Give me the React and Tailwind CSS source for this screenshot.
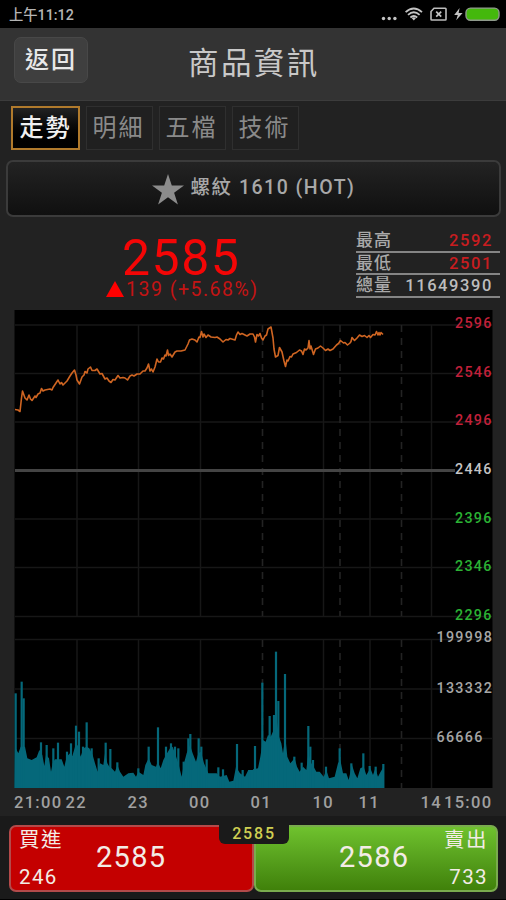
import React from "react";

const TABS = ["走勢", "明細", "五檔", "技術"];

const SUMMARY = [
  { label: "最高", value: "2592", color: "text-[#c81d20]" },
  { label: "最低", value: "2501", color: "text-[#c81d20]" },
  { label: "總量", value: "11649390", color: "text-[#bdbdbd]" },
];

const PRICE_LABELS = [
  { text: "2596", y: 327.5, fill: "#c2203a" },
  { text: "2546", y: 376.5, fill: "#c2203a" },
  { text: "2496", y: 424.5, fill: "#c2203a" },
  { text: "2446", y: 473.5, fill: "#c4c4c4" },
  { text: "2396", y: 522.5, fill: "#2bb234" },
  { text: "2346", y: 570.5, fill: "#2bb234" },
  { text: "2296", y: 619.5, fill: "#2bb234" },
];

const VOLUME_LABELS = [
  { text: "199998", x: 436.5, y: 642 },
  { text: "133332", x: 436.5, y: 693 },
  { text: "66666", x: 436.5, y: 742 },
];

const TIME_LABELS = [
  { text: "21:00", x: 14 },
  { text: "22", x: 65.5 },
  { text: "23", x: 127.5 },
  { text: "00", x: 189 },
  { text: "01", x: 250.5 },
  { text: "10", x: 312.5 },
  { text: "11", x: 358.5 },
  { text: "14", x: 420.5 },
  { text: "15:00", x: 444 },
];

const GRID_ROWS = [325, 373.5, 422, 519, 567.5, 616.5, 639.5, 689, 738.5];
const GRID_COLS = [77, 138.5, 200.5, 323.5, 370, 431.5];
const SESSION_COLS = [262.5, 340, 401.5];

const PRICE_LINE =
  "15,409.5 18,410 20,411.5 21.5,398 22.5,391 25,398 27,400 29,395 30.5,399 32,400.5 35,396 36,397.5 38,394 40,393 41.5,388.5 43,391 45,390 50,389 52,390 53,387.5 56,383 58,380 60,384 61.5,382.5 63,385 67,381 70,376 72,373 74.5,370 76,375 77,380 79.5,384 82,377 84,375 85,371.5 87,373 88,369 90.5,367 92,370.5 95,370.5 97,369 100,374 102,373.5 105,379 107,378 109,381 111,382.5 113,379.5 115,380 118,375.5 120,378 123,377.5 125,378 127.5,380 130,376 132,375 134,376 137,374 140,374 143,371 145,371 147,368 148.5,364 150,371 151.5,369 153,372 155,367 157,359 158.5,362 160.5,362 162,358 163.5,359 165,355 166,356 167.5,350 168.5,355.5 170,354 172,357 175,352 177,351 181,351 185,350 188,344 189.5,340 192,339 195,340 197,342 199,337 200,337.5 201.5,331.5 203,337 204,334 206,337.5 208,335 211,337 215,337.5 217,337 220,339 223,342 226,339.5 228,340 230,338.5 235,340 236.5,335 238,332 240,334.5 242,333.5 247,336 250,334 253,334 254.5,337 255.5,342 257,334.5 258.5,336 260,333.5 261.5,338 263,340 265,336 266.5,335 268,329 271,327 273,338 274,349 275.5,357 278,355.5 279.5,347.5 282,352 284,361 285.5,366.5 287,360 288,361 290,356.5 291.5,357 293,354 296.5,352.5 299.5,350 301.5,351 303,354.5 304.5,349 306,350 308,348 309,340.5 310,349 311,346 313.5,354.5 315.5,349 318,348 320.5,346 323,348 325.5,350.5 328,349 330,350.5 333,349 336.5,345 338.5,343.5 340.5,340.5 343.5,343 345,342.5 347.5,345 350,343 351,341.5 352,337.5 354.5,340.5 357,338 359.5,335 362,336.5 364.5,335.5 367,337.5 369,335.5 370.5,337.5 373,334.5 375,335 376.5,331.5 378,335 379,332.5 380,335 381,332.5 383,334.5";

// both halves are sampled at a third of a pixel
const NIGHT = {
  x: 0,
  y: 630,
  base: [
    [45, 350], [55, 370], [62, 350], [75, 350], [82, 385], [95, 390], [110, 382], [118, 360], [127, 375],
    [133, 408], [138, 375], [147, 385], [153, 425], [158, 400], [165, 388], [185, 388], [193, 410], [200, 380],
    [210, 370], [217, 378], [225, 350], [233, 345], [242, 380], [250, 355], [260, 350], [268, 355], [278, 375],
    [285, 400], [293, 425], [300, 400], [310, 405], [315, 370], [322, 400], [328, 410], [335, 415], [345, 425],
    [352, 405], [360, 425], [370, 440], [385, 430], [400, 428], [408, 440], [415, 425], [430, 435], [436, 405],
    [446, 385], [455, 405], [468, 410], [473, 395], [482, 415], [490, 390], [498, 375], [510, 355], [518, 350],
    [525, 370], [535, 400], [545, 440], [552, 400], [560, 370], [570, 345], [578, 370], [588, 395], [595, 370],
    [603, 365], [612, 400], [625, 430], [650, 430], [660, 440], [680, 435], [688, 455], [700, 452], [708, 410],
    [720, 430], [735, 440], [745, 420], [759, 420],
  ],
  spikes: [
    [47, 190], [65, 155], [71, 205], [123, 337], [140, 345], [160, 355], [174, 338], [201, 365], [213, 340],
    [228, 287], [237, 305], [249, 350], [260, 277], [275, 355], [296, 385], [317, 338], [331, 357], [352, 397],
    [415, 415], [446, 350], [474, 292], [498, 350], [513, 340], [525, 350], [535, 355], [551, 395], [565, 325],
    [571, 312], [596, 325], [604, 350], [620, 388], [655, 412], [669, 418], [711, 342], [728, 420], [748, 420],
  ],
};

const DAY = {
  x: 253,
  y: 600,
  base: [
    [0, 508], [15, 505], [22, 470], [30, 420], [38, 425], [45, 405], [53, 410], [62, 390], [70, 350],
    [78, 410], [85, 430], [90, 460], [97, 410], [103, 470], [112, 490], [125, 475], [132, 500], [140, 515],
    [150, 500], [160, 510], [166, 460], [175, 490], [182, 500], [190, 515], [200, 515], [212, 530], [220, 510],
    [228, 535], [245, 530], [255, 490], [262, 480], [270, 520], [280, 520], [287, 540], [297, 495], [305, 520],
    [313, 535], [322, 505], [332, 500], [340, 525], [352, 505], [360, 525], [367, 505], [375, 530], [383, 515],
    [392, 500],
  ],
  spikes: [
    [6, 438], [28, 248], [50, 348], [63, 345], [69, 155], [76, 303], [96, 222], [124, 470], [146, 488],
    [166, 378], [172, 440], [180, 480], [219, 500], [260, 445], [295, 490], [331, 460], [350, 498], [368, 500],
    [391, 492],
  ],
};

const place = (half, list) => list.map(([x, y]) => [half.x + x / 3, half.y + y / 3]);

const volumeBase = [...place(NIGHT, NIGHT.base), ...place(DAY, DAY.base)];
const volumeSpikes = [...place(NIGHT, NIGHT.spikes), ...place(DAY, DAY.spikes)];

const StatusBar = () => (
  <div className="h-7 shrink-0 bg-black flex items-center justify-between pl-[9px] pr-[6px] pt-[2px]">
    <span className="text-[14.3px] leading-none font-medium text-[#b4b4b4]">上午11:12</span>
    <svg width="121" height="20" viewBox="379 5.5 121 20" fill="none">
      <g fill="#c4c4c4">
        <circle cx="383.5" cy="19" r="1.7" />
        <circle cx="389.2" cy="19" r="1.7" />
        <circle cx="394.9" cy="19" r="1.7" />
      </g>
      <g stroke="#c4c4c4" strokeWidth="1.8">
        <path d="M405.6 12.6Q413.8 5.4 422 12.6" />
        <path d="M408 15.4Q413.8 10.2 419.6 15.4" />
        <path d="M410.4 18Q413.8 15 417.2 18" />
      </g>
      <path d="M411.6 18.6L413.8 21L416 18.6Q413.8 17 411.6 18.6Z" fill="#c4c4c4" />
      <path d="M434 8.8H445.3Q446 8.8 446 9.5V19.8Q446 20.5 445.3 20.5H431.7Q431 20.5 431 19.8V12Z" stroke="#bcbcbc" strokeWidth="1.6" />
      <path d="M436.2 12.2L441.2 17.2M441.2 12.2L436.2 17.2" stroke="#c4c4c4" strokeWidth="1.7" />
      <path d="M459.6 8.5L454.2 15.6H457.8L456.2 20.8L462.6 13.4H458.6Z" fill="#c4c4c4" />
      <rect x="466" y="8.6" width="33" height="12.2" rx="4.5" fill="#44b80c" stroke="#8f9a8c" strokeWidth="1.4" />
    </svg>
  </div>
);

const Header = () => (
  <div className="h-[73px] shrink-0 flex items-start bg-[#333] border-b border-[#3c3c3c] pt-[9px] pl-[14px]">
    <button className="w-[74px] h-[46px] rounded-[7px] border border-[#484848] bg-[#3f3f3f] text-[24px] leading-none tracking-[2px] font-medium text-[#e8e8e8]">
      返回
    </button>
    <h1 className="ml-[100px] mt-[10px] text-[30.5px] leading-[34px] tracking-[2.4px] text-[#c9c9c9]">商品資訊</h1>
  </div>
);

const Tabs = () => (
  <div className="flex gap-[6px] pl-[11px] pt-[5px] shrink-0">
    {TABS.map((tab, i) => (
      <div
        key={tab}
        className={`h-11 flex items-center justify-center pb-[1px] text-[24px] leading-none tracking-[2px] ${
          i === 0
            ? "w-[69px] border-2 border-[#b07a2c] bg-linear-to-b from-[#222] to-black text-[#f0f0f0] font-medium"
            : "w-[67px] pr-[2px] border border-[#2f2f2f] bg-[#202020] text-[#8a8a8a]"
        }`}
      >
        {tab}
      </div>
    ))}
  </div>
);

const ProductBar = () => (
  <div className="h-[57px] mt-[10px] ml-[6px] mr-[5px] shrink-0 flex items-center justify-center rounded-[7px] border-2 border-[#3b3b3b] bg-linear-to-b from-[#232323] to-[#101010]">
    <svg className="mt-[2px]" width="32" height="31" viewBox="0 0 32 31" fill="#8c8c8c">
      <path d="M16 0L19.8 11.6H32L22.1 18.8L25.9 30.5L16 23.3L6.1 30.5L9.9 18.8L0 11.6H12.2Z" />
    </svg>
    <span className="ml-[7px] mb-[1px] text-[19.5px] leading-none tracking-[1.5px] font-medium text-[#a8a8a8]">螺紋 1610 (HOT)</span>
  </div>
);

const Quote = () => (
  <div className="h-[93px] shrink-0 flex justify-between">
    <div className="w-[356px] pt-[20px] text-[#f40606]">
      <div className="pl-[122px] text-[50px] leading-[43px] tracking-[1.5px]">2585</div>
      <div className="flex items-center pl-[106px] pt-[1px]">
        <svg className="mb-[1px]" width="18" height="16" viewBox="0 0 18 16" fill="#ff0000">
          <path d="M9 0L18 16H0Z" />
        </svg>
        <span className="ml-[2px] text-[19.5px] leading-[16px] tracking-[1.5px] text-[#c41414]">139 (+5.68%)</span>
      </div>
    </div>
    <div className="w-[144px] mr-[6px] pt-[13px]">
      {SUMMARY.map((row) => (
        <div key={row.label} className="h-[22.6px] flex items-center justify-between border-b-2 border-[#858585] pr-[7px] leading-none">
          <span className="pt-px text-[17px] tracking-[1px] font-medium text-[#a9a9a9]">{row.label}</span>
          <span className={`pt-[2px] text-[16.5px] tracking-[1.6px] font-medium ${row.color}`}>{row.value}</span>
        </div>
      ))}
    </div>
  </div>
);

const Chart = () => (
  <svg className="shrink-0" width="506" height="506" viewBox="0 310 506 506" fill="none">
    <rect x="14.5" y="310" width="478" height="478" fill="#000" />
    <g stroke="#171717" strokeWidth="1.5">
      {GRID_ROWS.map((y) => (
        <line key={y} x1="15" x2="492" y1={y} y2={y} />
      ))}
      {GRID_COLS.map((x) => (
        <path key={x} d={`M${x} 325V616M${x} 640V788`} />
      ))}
    </g>
    <g stroke="#232323" strokeWidth="1.6" strokeDasharray="7 6">
      {SESSION_COLS.map((x) => (
        <path key={x} d={`M${x} 325V616M${x} 640V788`} />
      ))}
    </g>
    <line x1="15" x2="455" y1="470.5" y2="470.5" stroke="#444" strokeWidth="3" />
    <polygon points={`14.5,788 ${volumeBase.map((p) => p.join(",")).join(" ")} 384,788`} fill="#05687a" />
    {volumeSpikes.map(([x, y]) => (
      <rect key={x} x={x - 1.1} y={y} width="2.2" height={788 - y} fill="#05687a" />
    ))}
    <polyline points={PRICE_LINE} stroke="#cf6522" strokeWidth="1.6" strokeLinejoin="round" />
    <g fontSize="14.3" fontWeight="500" letterSpacing="1.3">
      {PRICE_LABELS.map((l) => (
        <text key={l.text} x="455" y={l.y} fill={l.fill}>
          {l.text}
        </text>
      ))}
      {VOLUME_LABELS.map((l) => (
        <text key={l.text} x={l.x} y={l.y} fill="#a6a6a6">
          {l.text}
        </text>
      ))}
    </g>
    <g fontSize="16.5" fontWeight="500" letterSpacing="1.3" fill="#a0a0a0">
      {TIME_LABELS.map((l) => (
        <text key={l.text} x={l.x} y="808">
          {l.text}
        </text>
      ))}
    </g>
  </svg>
);

const OrderBar = () => (
  <div className="relative flex-1 bg-[#1a1a1a] pt-[9px] pl-[9px] pr-[8px] border-b border-black">
    <div className="h-[67px] flex leading-none text-[#f3ece6]">
      <div className="w-[245px] flex rounded-[7px] border-2 border-[#b34a4a] bg-[#c40000]">
        <div className="w-[84px] pl-[8px] pt-[3px] pb-[3px] flex flex-col justify-between">
          <span className="text-[20.5px] tracking-[1.5px]">買進</span>
          <span className="text-[20.5px] tracking-[1.4px]">246</span>
        </div>
        <span className="pl-px pt-[16px] text-[29px] tracking-[1.3px]">2585</span>
      </div>
      <div className="w-[244px] flex justify-between rounded-[7px] border-2 border-[#7aab4e] bg-linear-to-b from-[#6fc22e] to-[#40810a]">
        <span className="pl-[83px] pt-[16px] text-[29px] tracking-[1.3px]">2586</span>
        <div className="pr-[8px] pt-[3px] pb-[3px] flex flex-col justify-between items-end">
          <span className="text-[20.5px] tracking-[1.5px]">賣出</span>
          <span className="text-[20.5px] tracking-[1.4px]">733</span>
        </div>
      </div>
    </div>
    <div className="absolute left-[219px] top-[6px] w-[70px] h-[22px] rounded-b-[6px] bg-[#1a1a1a] flex items-center justify-center pt-[2px] text-[16px] leading-none tracking-[1.8px] text-[#cfcf52] font-medium">
      2585
    </div>
  </div>
);

export default function App() {
  return (
    <div className="w-[506px] h-[900px] overflow-hidden flex flex-col bg-[#222] font-[Roboto,'Noto_Sans_CJK_TC',sans-serif]">
      <StatusBar />
      <Header />
      <Tabs />
      <ProductBar />
      <Quote />
      <Chart />
      <OrderBar />
    </div>
  );
}
